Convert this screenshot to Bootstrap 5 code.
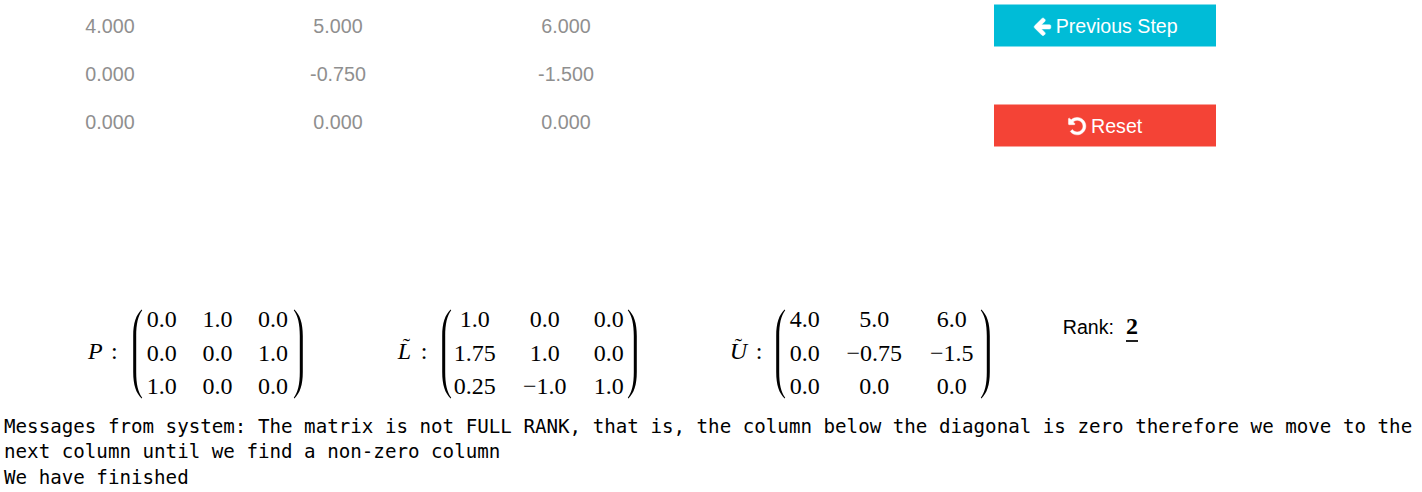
<!DOCTYPE html>
<html lang="en">
<head>
<meta charset="utf-8">
<title>LU decomposition</title>
<link href="https://cdn.jsdelivr.net/npm/bootstrap@5.3.0/dist/css/bootstrap.min.css" rel="stylesheet">
<style>
body{font-family:"Liberation Sans",Arial,sans-serif;font-size:19.7px;color:#000;background:#fff;overflow:hidden}
.work-area{height:305px;padding-top:2px}
.values{display:grid;grid-template-columns:repeat(3,228px);grid-auto-rows:48px;line-height:48px;margin-left:-4px;color:#8f8f8f;text-align:center}
.actions{width:222px;margin-left:314px;padding-top:2px;gap:57px}
.actions .btn{--bs-btn-color:#fff;--bs-btn-hover-color:#fff;height:43px;border:solid;border-width:1px 0;border-radius:0;padding:1px 0 0;font-size:19.6px;line-height:41px;gap:5px}
.actions .btn-step{--bs-btn-bg:#00bcd7;--bs-btn-hover-bg:#00a9c1;border-color:#80ddeb}
.actions .btn-reset{--bs-btn-bg:#f44336;--bs-btn-hover-bg:#db3c30;border-color:#f9a19a}
.btn svg{width:20.3px;height:20.3px;margin:0 -1.5px 0 -.5px;stroke:currentColor;stroke-width:40}
.results{height:108px;font-family:"Liberation Serif","Times New Roman",serif;font-size:24px}
.symbol{width:45px;height:100px;line-height:92px;font-style:italic}
.symbol i{display:inline-block;position:relative;left:-1px;width:22px}
.symbol .wide{width:24px;left:-2px}
.symbol .tilde::before{content:"\02DC";position:absolute;left:5px;top:-5px;font-style:normal;font-size:22px}
.symbol b{font-weight:400;font-style:normal}
.matrix{display:grid;grid-auto-rows:33.4px;line-height:33.4px;text-align:center;white-space:nowrap;position:relative;margin-top:-1.8px;height:100px}
.matrix span{min-width:0;display:flex;justify-content:center}
.matrix svg{position:absolute;top:5.800px;left:-1px;width:10px;height:90px}
.matrix svg:last-child{left:auto;right:-2px;transform:scaleX(-1)}
.m-p{grid-template-columns:repeat(3,55.6px)}
.m-l{grid-template-columns:64px 76px 52px}
.m-u{grid-template-columns:56px 83px 72px}
.rank{font-family:"Liberation Sans",Arial,sans-serif;font-size:19.6px;line-height:30px;margin-left:75px;padding-top:7px}
.rank strong{font-family:"Liberation Serif",serif;font-size:24px;margin-left:12px;line-height:27px;border-bottom:2px solid #222;display:inline-block;height:29px}
.messages{font:19.18px/25.4px "DejaVu Sans Mono",monospace;margin:0;padding:1px 0 0 4px;color:#000;overflow:visible}
</style>
</head>
<body>
<svg class="d-none"><symbol id="paren" viewBox="0 0 10 90"><path d="M8.600 .5C3 6 .2 14 .2 27V63C.2 76 3 84 8.600 89.500L9.200 88.800C5 83 3.200 75 3.200 63V27C3.200 15 5 7 9.200 1.200Z"/></symbol></svg>
<main>
  <section class="work-area d-flex align-items-start">
    <div class="values">
      <span>4.000</span><span>5.000</span><span>6.000</span>
      <span>0.000</span><span>-0.750</span><span>-1.500</span>
      <span>0.000</span><span>0.000</span><span>0.000</span>
    </div>
    <div class="actions d-flex flex-column">
      <button class="btn btn-step d-flex align-items-center justify-content-center"><svg viewBox="0 0 1792 1792" fill="currentColor"><path d="M1664 896v128q0 53-32.500 90.500t-84.500 37.500h-704l293 294q38 36 38 90t-38 90l-75 76q-37 37-90 37-52 0-91-37l-651-652q-37-37-37-90 0-52 37-91l651-650q38-38 91-38 52 0 90 38l75 74q38 38 38 91t-38 91l-293 293h704q52 0 84.500 37.500t32.500 90.500z"/></svg><span>Previous Step</span></button>
      <button class="btn btn-reset d-flex align-items-center justify-content-center"><svg viewBox="0 0 1792 1792" fill="currentColor"><path d="M1664 896q0 156-61 298t-164 245-245 164-298 61q-172 0-327-72.500t-264-204.500q-7-10-6.500-22.500t8.500-20.500l137-138q10-9 25-9 16 2 23 12 73 95 179 147t225 52q104 0 198.500-40.500t163.500-109.500 109.500-163.500 40.500-198.500-40.500-198.500-109.500-163.500-163.500-109.500-198.500-40.500q-98 0-188 35.500t-160 101.500l137 138q31 30 14 69-17 40-59 40h-448q-26 0-45-19t-19-45v-448q0-42 40-59 39-17 69 14l130 129q107-101 244.500-156.500t284.500-55.500q156 0 298 61t245 164 164 245 61 298z"/></svg><span>Reset</span></button>
    </div>
  </section>
  <section class="results d-flex align-items-start">
    <div class="symbol" style="margin-left:89px"><i>P</i><b>:</b></div>
    <div class="matrix m-p"><svg><use href="#paren"/></svg>
      <span>0.0</span><span>1.0</span><span>0.0</span><span>0.0</span><span>0.0</span><span>1.0</span><span>1.0</span><span>0.0</span><span>0.0</span>
    <svg><use href="#paren"/></svg></div>
    <div class="symbol" style="margin-left:97px"><i class="tilde" style="left:0;width:23px">L</i><b>:</b></div>
    <div class="matrix m-l"><svg><use href="#paren"/></svg>
      <span>1.0</span><span>0.0</span><span>0.0</span><span>1.75</span><span>1.0</span><span>0.0</span><span>0.25</span><span>−1.0</span><span>1.0</span>
    <svg><use href="#paren"/></svg></div>
    <div class="symbol" style="margin-left:97px"><i class="tilde wide">U</i><b>:</b></div>
    <div class="matrix m-u"><svg><use href="#paren"/></svg>
      <span>4.0</span><span>5.0</span><span>6.0</span><span>0.0</span><span>−0.75</span><span>−1.5</span><span>0.0</span><span>0.0</span><span>0.0</span>
    <svg><use href="#paren"/></svg></div>
    <div class="rank">Rank:<strong>2</strong></div>
  </section>
<pre class="messages">Messages from system: The matrix is not FULL RANK, that is, the column below the diagonal is zero therefore we move to the
next column until we find a non-zero column
We have finished</pre>
</main>
<script src="https://cdn.jsdelivr.net/npm/bootstrap@5.3.0/dist/js/bootstrap.bundle.min.js"></script>
</body>
</html>
